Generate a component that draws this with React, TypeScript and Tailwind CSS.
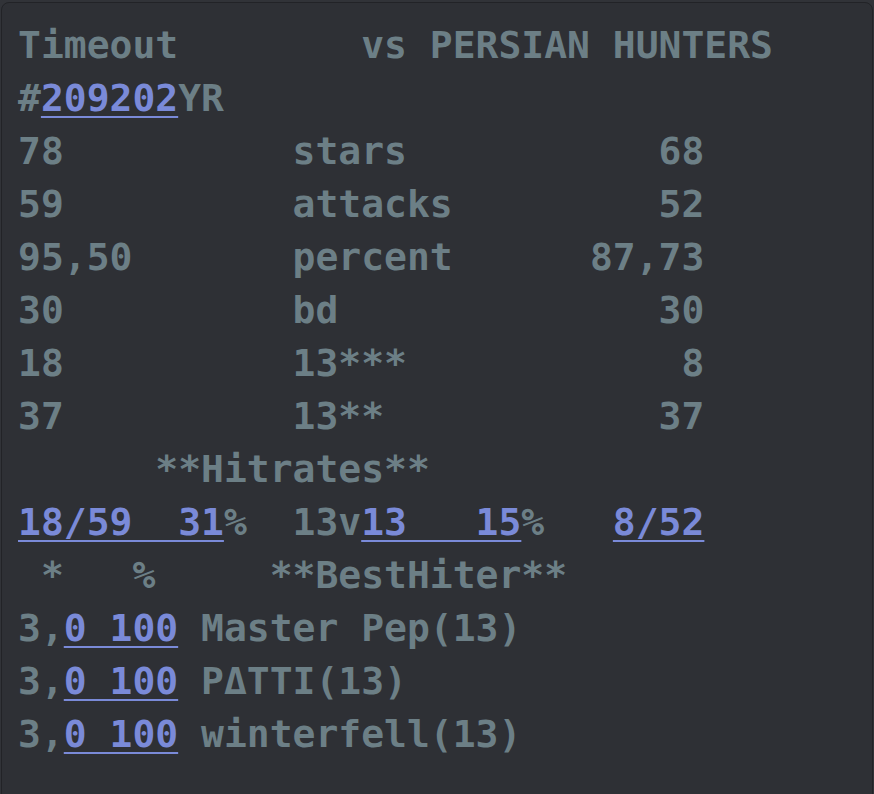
const lines: { text: string; link?: [number, number][] }[] = [
  { text: 'Timeout        vs PERSIAN HUNTERS' },
  { text: '#209202YR', link: [[1, 7]] },
  { text: '78          stars           68' },
  { text: '59          attacks         52' },
  { text: '95,50       percent      87,73' },
  { text: '30          bd              30' },
  { text: '18          13***            8' },
  { text: '37          13**            37' },
  { text: '      **Hitrates**' },
  { text: '18/59  31%  13v13   15%   8/52', link: [[0, 9], [15, 22], [26, 30]] },
  { text: ' *   %     **BestHiter**' },
  { text: '3,0 100 Master Pep(13)', link: [[2, 7]] },
  { text: '3,0 100 P\u0394TTI(13)', link: [[2, 7]] },
  { text: '3,0 100 winterfell(13)', link: [[2, 7]] },
]

function Line({ text, link = [] }: { text: string; link?: [number, number][] }) {
  const parts: React.ReactNode[] = []
  let pos = 0
  link.forEach(([a, b], i) => {
    if (a > pos) parts.push(<span key={'t' + i}>{text.slice(pos, a)}</span>)
    parts.push(
      <span key={'l' + i} className="text-[#7a8ad8] underline decoration-[2px] underline-offset-[5px]">
        {text.slice(a, b)}
      </span>
    )
    pos = b
  })
  if (pos < text.length) parts.push(<span key="end">{text.slice(pos)}</span>)
  return <div className="h-[53px] whitespace-pre">{parts}</div>
}

export default function App() {
  return (
    <div className="min-h-screen bg-[#313338] pt-[2px] pl-[1px] pr-[1px] overflow-hidden">
      <div
        className="h-[820px] rounded-lg border border-[#222327] bg-[#2e3035] pt-[16px] pl-[16px] text-[38px] font-bold leading-[53px] text-[#6c7f86]"
        style={{ fontFamily: '"DejaVu Sans Mono", monospace' }}
      >
        {lines.map((l, i) => (
          <Line key={i} text={l.text} link={l.link} />
        ))}
      </div>
    </div>
  )
}
